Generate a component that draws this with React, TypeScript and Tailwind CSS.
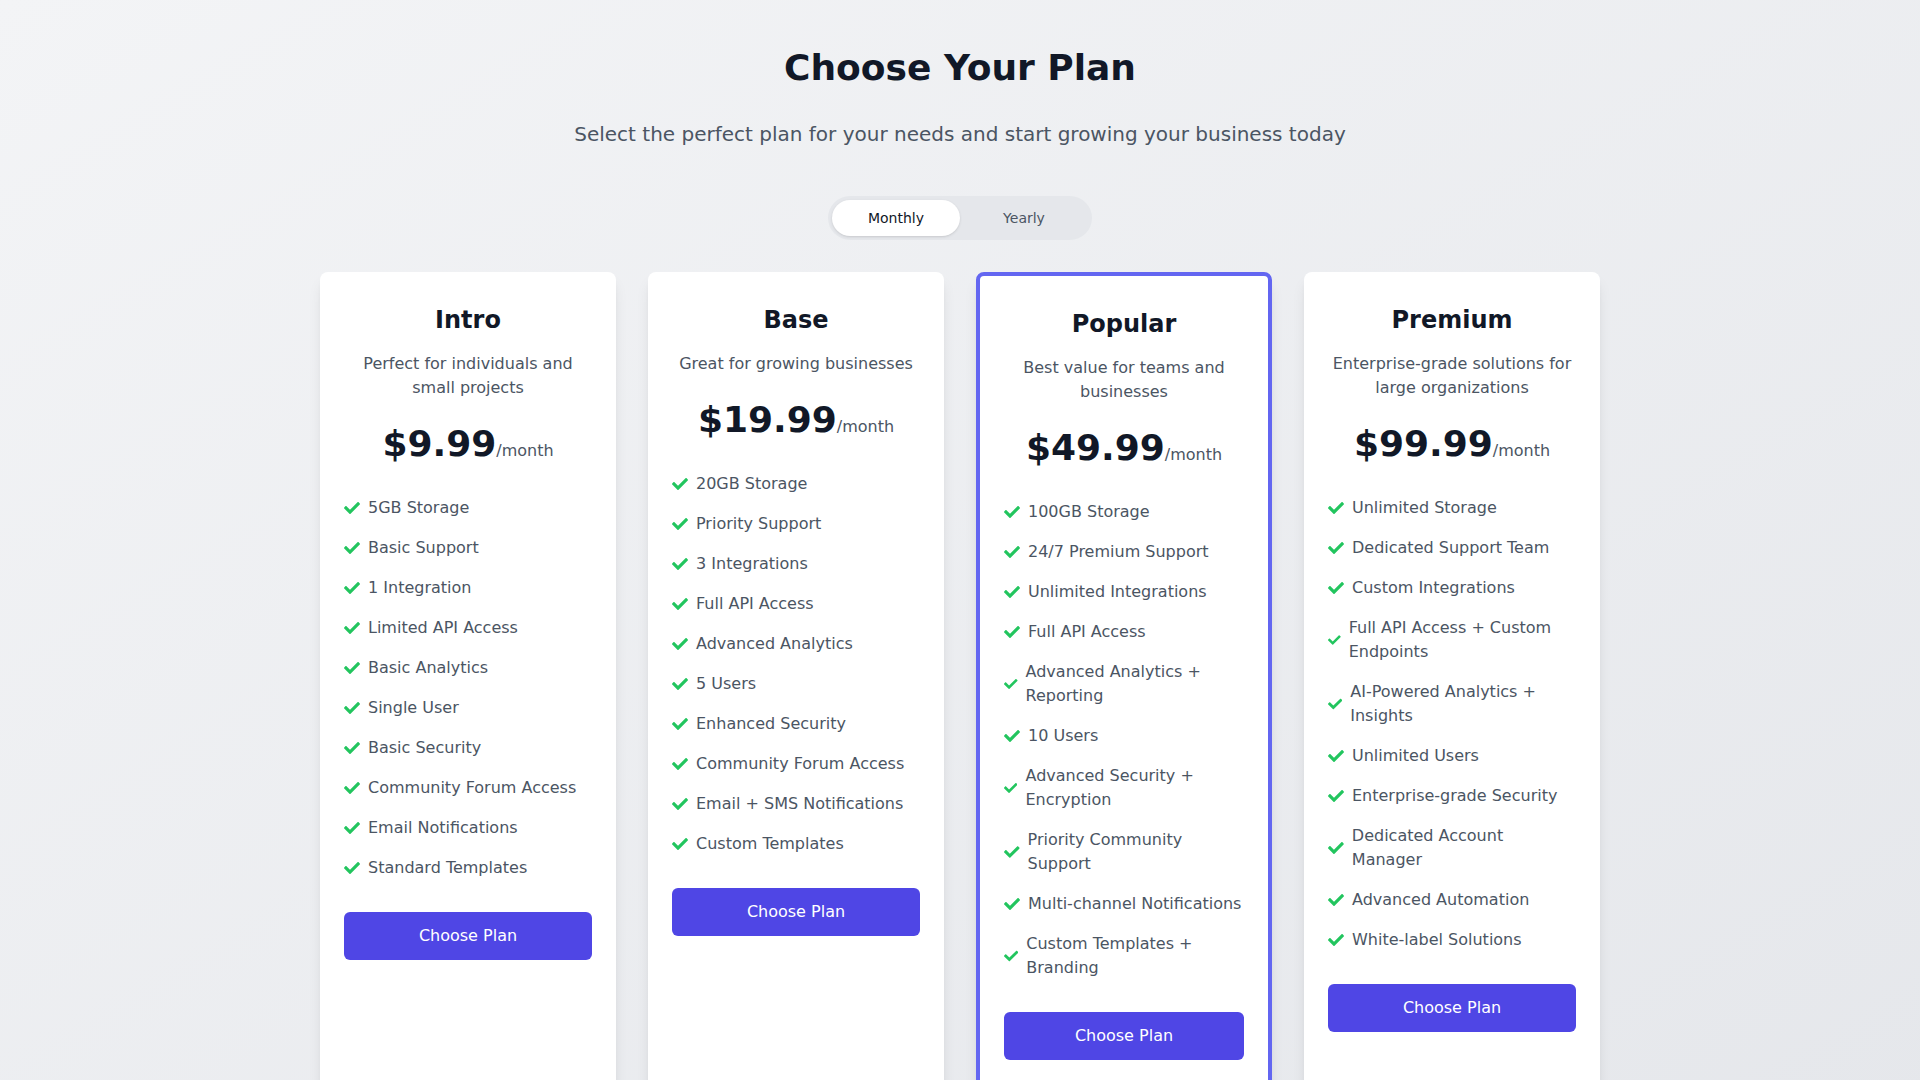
import React from "react";
import { FaCheck } from "react-icons/fa";

type Plan = {
  name: string;
  description: string;
  price: string;
  features: string[];
  popular?: boolean;
};

const plans: Plan[] = [
  {
    name: "Intro",
    description: "Perfect for individuals and small projects",
    price: "$9.99",
    features: [
      "5GB Storage",
      "Basic Support",
      "1 Integration",
      "Limited API Access",
      "Basic Analytics",
      "Single User",
      "Basic Security",
      "Community Forum Access",
      "Email Notifications",
      "Standard Templates",
    ],
  },
  {
    name: "Base",
    description: "Great for growing businesses",
    price: "$19.99",
    features: [
      "20GB Storage",
      "Priority Support",
      "3 Integrations",
      "Full API Access",
      "Advanced Analytics",
      "5 Users",
      "Enhanced Security",
      "Community Forum Access",
      "Email + SMS Notifications",
      "Custom Templates",
    ],
  },
  {
    name: "Popular",
    description: "Best value for teams and businesses",
    price: "$49.99",
    popular: true,
    features: [
      "100GB Storage",
      "24/7 Premium Support",
      "Unlimited Integrations",
      "Full API Access",
      "Advanced Analytics + Reporting",
      "10 Users",
      "Advanced Security + Encryption",
      "Priority Community Support",
      "Multi-channel Notifications",
      "Custom Templates + Branding",
    ],
  },
  {
    name: "Premium",
    description: "Enterprise-grade solutions for large organizations",
    price: "$99.99",
    features: [
      "Unlimited Storage",
      "Dedicated Support Team",
      "Custom Integrations",
      "Full API Access + Custom Endpoints",
      "AI-Powered Analytics + Insights",
      "Unlimited Users",
      "Enterprise-grade Security",
      "Dedicated Account Manager",
      "Advanced Automation",
      "White-label Solutions",
    ],
  },
];

function PlanCard({ plan }: { plan: Plan }) {
  return (
    <div
      className={
        plan.popular
          ? "bg-white rounded-lg shadow-lg px-6 pt-8 pb-8 border-4 border-[#6366f1]"
          : "bg-white rounded-lg shadow-lg px-6 pt-8 pb-8"
      }
    >
      <h2 className="text-2xl font-bold text-[#111827] text-center mb-4">{plan.name}</h2>
      <p className="text-base text-[#4b5563] text-center mb-6">{plan.description}</p>
      <div className="text-center mb-8">
        <span className="text-4xl font-bold text-[#111827]">{plan.price}</span>
        <span className="text-base text-[#4b5563]">/month</span>
      </div>
      <ul className="space-y-4">
        {plan.features.map((f) => (
          <li key={f} className="flex items-center gap-2 text-base text-[#4b5563]">
            <FaCheck className="w-4 h-4 text-[#22c55e]" />
            <span>{f}</span>
          </li>
        ))}
      </ul>
      <button className="mt-8 w-full py-3 bg-[#4f46e5] text-white text-base rounded-md">
        Choose Plan
      </button>
    </div>
  );
}

export default function App() {
  return (
    <div className="min-h-screen bg-linear-to-br from-[#f3f4f6] to-[#e5e7eb] font-['DejaVu_Sans',sans-serif] pt-12 pb-12">
      <h1 className="text-4xl font-bold text-[#111827] text-center mb-8">Choose Your Plan</h1>
      <p className="text-xl text-[#4b5563] text-center mb-12">
        Select the perfect plan for your needs and start growing your business today
      </p>
      <div className="flex justify-center mb-8">
        <div className="flex p-1 bg-[#e5e7eb] rounded-full">
          <button className="w-32 py-2 text-sm text-[#111827] bg-white rounded-full shadow-sm">
            Monthly
          </button>
          <button className="w-32 py-2 text-sm text-[#4b5563] rounded-full">Yearly</button>
        </div>
      </div>
      <div className="max-w-7xl mx-auto grid grid-cols-4 gap-8">
        {plans.map((p) => (
          <PlanCard key={p.name} plan={p} />
        ))}
      </div>
    </div>
  );
}
